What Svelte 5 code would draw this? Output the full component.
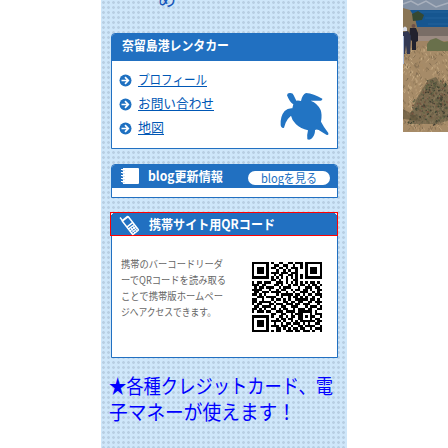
<script>
  const qr = [
    '11111110100110011011101111111',
    '10000010011001100100101000001',
    '10111010110110101110101011101',
    '10111010001001010010001011101',
    '10111010111011101110001011101',
    '10000010010110011010101000001',
    '11111110101010101010101111111',
    '00000000110100100110000000000',
    '10110111001110101010101011010',
    '11101100011010010110110101101',
    '01011011100101110001001110110',
    '11110001001011001011011010011',
    '01101110111100100100111001010',
    '11010100001011111011010110111',
    '00111011110010010110101001001',
    '11001000101101010011111011010',
    '11011111010001101101100110111',
    '10110001101110111011011100010',
    '01101111010011001110001011101',
    '11010100110101100101110110011',
    '10111011001110111101111110100',
    '00000000110011001011100010111',
    '11111110100110101101101011001',
    '10000010001011011001100010110',
    '10111010111101001010111111011',
    '10111010010010110111010100110',
    '10111010111011101001101111001',
    '10000010001101010110110010111',
    '11111110101100111011011101001'
  ];
  const cells = qr.map((r, y) => [...r].map((c, x) => c === '1' ? `M${x} ${y}h1v1h-1z` : '').join('')).join('');
  const links = [['プロフィール', 69], ['お問い合わせ', 76], ['地図', 26]];
  const note = [['携帯のバーコードリーダ', 102], ['ーでQRコードを読み取る', 105], ['ことで携帯版ホームペー', 102], ['ジへアクセスできます。', 95]];
  const notice = [['★各種クレジットカード、電', 224], ['子マネーが使えます！', 187]];
  let seed = 4711;
  const rnd = () => (seed = (seed * 16807) % 2147483647) / 2147483647;
  const pick = (list) => list[Math.floor(rnd() * list.length)];
  const grass = Array.from({ length: 520 }, () => ({
    x: rnd() * 45, y: 47 + rnd() * 85, dx: rnd() * 4 - 2,
    c: pick(['#bda17c', '#7d6950', '#a98b66', '#8d7656', '#ccb28a'])
  }));
  const bush = Array.from({ length: 300 }, () => {
    const y = 80 + rnd() * 44;
    const left = y < 98 ? 25 - (y - 80) * 0.5 : 12 - (y - 98) * 0.25;
    return {
      x: left + rnd() * (45 - left), y, dx: rnd() * 4 - 2, dy: rnd() * 4 - 2,
      c: pick(['#3f4634', '#5d5a43', '#413d30', '#856f57', '#646546', '#72543f'])
    };
  });
</script>

<div class="page">
  <aside>
    <p class="partial"><svg width="18" height="8"><text x="0" y="5.5" textLength="18" lengthAdjust="spacingAndGlyphs">め</text></svg></p>
    <section class="company">
      <h2><svg width="112" height="18"><text x="0" y="13" textLength="107" lengthAdjust="spacingAndGlyphs">奈留島港レンタカー</text></svg></h2>
      <ul>
        {#each links as [label, width]}
          <li>
            <svg class="arrow" width="13" height="13" viewBox="0 0 13 13"><circle cx="6.5" cy="6.5" r="6" fill="#1e70c1"/><path d="M2.500 6.500h6M6 3.200l3.300 3.300L6 9.800" fill="none" stroke="#fff" stroke-width="1.7"/></svg>
            <a href="#{label}"><svg {width} height="18"><text x="0" y="13" textLength={width} lengthAdjust="spacingAndGlyphs">{label}</text><path d={`M0 15.5h${width}`} stroke="#0057b5"/></svg></a>
          </li>
        {/each}
      </ul>
      <svg class="turtle" width="50" height="50" viewBox="0 0 150 150"><path fill="#2274c3" d="M27 22Q28 14 37 15Q45 15 47 22L55 38Q62 37 69 39Q73 19 84 15Q107 17 133 32Q134 37 128 38L98 38Q119 46 128 66Q133 80 129 101Q137 117 151 135Q153 143 145 140L122 126Q116 123 111 126Q112 139 102 151Q95 158 88 154Q86 143 90 127Q68 122 54 109Q42 98 39 83Q28 92 23 104L18 119Q10 123 8 112Q6 85 20 69Q29 60 43 61L46 49Q35 43 27 22Z"/></svg>
    </section>

    <section class="blog">
      <h2>
        <svg class="book" width="18" height="17" viewBox="0 0 18 17"><path d="M2 0h15q1 0 1 1v14q0 1-1 1H2v-2H0v-1h2v-2H0v-1h2V8H0V7h2V5H0V4h2V2H0V1h2z" fill="#fff"/><path d="M1 2.500h3m-3 3h3m-3 3h3m-3 3h3m-3 3h3" stroke="#b7d2ed" stroke-width=".6"/></svg>
        <svg width="78" height="18"><text x="0" y="12.500" textLength="75" lengthAdjust="spacingAndGlyphs">blog更新情報</text></svg>
        <span class="button"><svg width="56" height="14"><text x="0" y="11.500" textLength="56" lengthAdjust="spacingAndGlyphs">blogを見る</text></svg></span>
      </h2>
    </section>

    <section class="mobile">
      <h2>
        <svg class="phone" width="21" height="21" viewBox="0 0 21 21"><g transform="rotate(-38 10 11)"><path d="M6 2V-1h1.500v3H13q1.500 0 1.500 1.500v16q0 1.500-1.500 1.500H7q-1.500 0-1.500-1.500v-16Q5.500 2 6 2z" fill="#fff"/><path d="M7 4h6v6H7z" fill="#2170c1"/><path d="M7 12h6M7 14.500h1.500m1 0H11m1 0h1M7 17h1.500m1 0H11m1 0h1M7 19h1.500m1 0H11m1 0h1" stroke="#2170c1" stroke-width="1.2"/></g></svg>
        <svg width="128" height="18"><text x="0" y="13.500" textLength="126" lengthAdjust="spacingAndGlyphs">携帯サイト用QRコード</text></svg>
      </h2>
      <div class="content">
        <div class="note">
          {#each note as [line, width]}<svg width="108" height="16"><text x="0" y="12" textLength={width} lengthAdjust="spacingAndGlyphs">{line}</text></svg>{/each}
        </div>
        <svg class="qr" width="70" height="70" viewBox="0 0 29 29" shape-rendering="crispEdges"><path d={cells}/></svg>
      </div>
    </section>

    <div class="notice">
      {#each notice as [line, width]}<svg width="230" height="26"><text x="0" y="20" textLength={width} lengthAdjust="spacingAndGlyphs">{line}</text></svg>{/each}
    </div>
  </aside>

  <svg class="photo" width="45" height="132" viewBox="0 0 45 132">
    <defs><filter id="soft" x="-5%" y="-5%" width="110%" height="110%"><feGaussianBlur stdDeviation=".6"/></filter></defs>
    <rect width="45" height="132" fill="#a08463"/>
    <g filter="url(#soft)">
      <path d="M-2-2h49v12H-2z" fill="#8391a4"/><path d="M0 4l8-3 7 4 8-4 10 6 12-4" fill="none" stroke="#a8b0bd" stroke-width="1.500"/>
      <path d="M-2 10h49v18H-2z" fill="#175690"/><path d="M14 12h31M22 18h23M25 24h20" stroke="#22629c"/>
      <path d="M-2 27h49v10H-2z" fill="#796d66"/><path d="M14 36h33v5H14z" fill="#9c8b82"/>
      <path d="M0 8l7 2 5 8 3 13-3 9H0z" fill="#8a7454"/><path d="M9 14l6-3 6 4-2 5-9 1z" fill="#354833"/>
      <path d="M-2 48h49v84H-2z" fill="#a68b67"/>
      {#each grass as g}<path d={`M${g.x} ${g.y}l${g.dx} -2.5`} stroke={g.c} stroke-width="1" opacity=".8"/>{/each}
      <path d="M24 44l3-4 6-2 8 4 6-1v10H24z" fill="#69704b"/>
      <path d="M5 124l8-24 12-20 8-3 4 6 10 3v34l-13 4z" fill="#4b4b38" opacity=".5"/>
      {#each bush as b}<path d={`M${b.x} ${b.y}l${b.dx} ${b.dy}`} stroke={b.c} stroke-width="1.4"/>{/each}
      <path d="M0 109l13 7 5 5-18-2z" fill="#5b5038" opacity=".6"/>
    </g>
    <g filter="url(#soft)">
      <path d="M7 28h6l2 5v8l-2 1v8H9v-9L6 38z" fill="#22242e"/><circle cx="10.500" cy="26" r="2" fill="#6c514a"/>
      <path d="M0 32l5-1 3 5-1 18H4l-1-9-1 9H0z" fill="#303752"/><path d="M0 28q2-3 4 0v3H0z" fill="#dadde5"/><path d="M-1 36h2v28h-2z" fill="#aebcd8"/>
    </g>
  </svg>
</div>

<style>
  :global(body) { background: white; overflow: hidden; }
  .page { width: 448px; height: 448px; display: flex; overflow: hidden; font-family: "Noto Sans CJK JP", sans-serif; }
  aside { box-sizing: border-box; width: 246px; height: 448px; margin-left: 101px; padding-left: 10px; background: radial-gradient(circle at 2.5px 2.5px, #b8cfe3 0 1px, transparent 1.7px) 0 0 / 5px 5px, #cfe7fa; flex-shrink: 0; }
  svg { display: block; flex-shrink: 0; overflow: visible; }
  .partial { height: 33px; margin: 0; padding-left: 47px; box-sizing: border-box; font-size: 18px; }
  .partial text { fill: #1455b9; }
  section { position: relative; box-sizing: border-box; width: 227px; border: 1px solid #2170c1; border-radius: 4px 4px 0 0; background: white; }
  h2 { box-sizing: border-box; margin: 0; background: #2170c1; color: white; display: flex; align-items: center; font-size: 13px; font-weight: 700; border-radius: 3px 3px 0 0; }
  h2 text { fill: white; }
  .company { height: 116px; }
  .company h2 { height: 27px; padding: 0 0 3px 10px; }
  ul { list-style: none; margin: 0; padding: 7px 0 0 7px; }
  li { height: 24px; display: flex; align-items: center; gap: 6px; font-size: 13px; }
  a { color: #0057b5; text-decoration: none; }
  a text { fill: #0057b5; }
  .turtle { position: absolute; right: 9px; bottom: 10px; }
  .blog { height: 34px; margin-top: 15px; }
  .blog h2 { height: 23px; padding-left: 9px; gap: 9px; }
  .button { width: 82px; height: 14px; margin-top: 2px; margin-left: 13px; display: flex; justify-content: center; background: white; border-radius: 8px; font-size: 12px; font-weight: 400; margin-left: 13px; }
  .button text { fill: #2170c1; }
  .mobile { height: 145px; margin-top: 15px; }
  .mobile h2 { width: 228px; height: 24px; margin: -2px 0 0 -2px; padding-left: 9px; gap: 8px; border: 1px solid #f00; border-radius: 0; background: linear-gradient(135deg, #dceaf7 2px, transparent 2px), linear-gradient(225deg, #dceaf7 2px, transparent 2px), #2170c1; }
  .content { display: flex; }
  .note { width: 131px; padding: 20px 0 0 9px; box-sizing: border-box; font-size: 10px; }
  .note text { fill: #666; }
  .qr { margin: 26px 0 0 9px; }
  .notice { padding-top: 16px; margin-left: -2px; font-size: 20px; }
  .notice text { fill: #00f; }
  .photo { margin-left: 56px; overflow: hidden; }
</style>
